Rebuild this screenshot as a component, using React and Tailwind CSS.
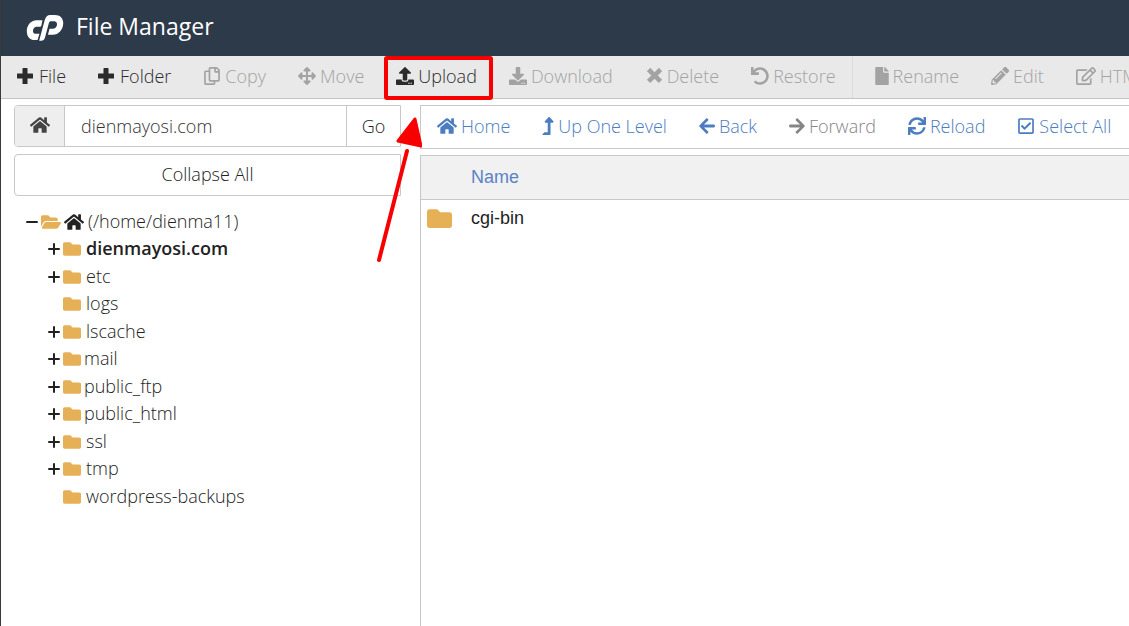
import {
  FaRegCopy, FaArrowsAlt, FaFile, FaPencilAlt, FaHome, FaLevelUpAlt, FaRegCheckSquare,
  FaFolder, FaFolderOpen, FaRegEdit, FaUpload, FaDownload, FaUndo, FaSync, FaArrowLeft, FaArrowRight,
} from "react-icons/fa";

function CpLogo() {
  return (
    <svg viewBox="79 43 114 80" className="h-[26px] w-[38px] shrink-0" fill="#fff" aria-hidden="true">
      <path d="M128 59H110C92 59 80 75 80 92c0 18 10 28 24 28h9l6-19h-11c-6 0-9-4-9-9 0-8 5-13 11-13h9c3 0 5-1 6-4z" />
      <path d="M118 122l17-63C138 48 144 43 152 43h14c18 0 27 12 26 27-1 18-14 34-32 34h-15l5-19h11c8 0 12-7 12-14 0-6-4-9-9-9h-9c-4 0-6 2-7 6l-12 44c-2 7-6 10-11 10z" />
    </svg>
  );
}

function ThickPlus({ className }) {
  return (
    <svg viewBox="0 0 16 16" className={className} fill="currentColor" aria-hidden="true">
      <path d="M6 0h4a.5.5 0 0 1 .5.5v5h5a.5.5 0 0 1 .5.5v4a.5.5 0 0 1-.5.5h-5v5a.5.5 0 0 1-.5.5H6a.5.5 0 0 1-.5-.5v-5h-5A.5.5 0 0 1 0 10V6a.5.5 0 0 1 .5-.5h5v-5A.5.5 0 0 1 6 0z" />
    </svg>
  );
}

function ThickCross({ className }) {
  return (
    <svg viewBox="-1 0 17 17" className={className} fill="currentColor" aria-hidden="true">
      <path d="M3.9.8L8 4.900 12.100.8l3.100 3.100L11.100 8l4.100 4.100-3.100 3.100L8 11.100l-4.100 4.100L.8 12.100 4.900 8 .8 3.900z" />
    </svg>
  );
}

function TreeSign({ open }) {
  return (
    <svg viewBox="0 0 12 12" className="size-3" fill="none" stroke="currentColor" strokeWidth="2" strokeLinecap="round" aria-hidden="true">
      <path d={open ? "M1 6H11" : "M1 6H11M6 1V11"} />
    </svg>
  );
}

const tools = [
  { label: "File", icon: ThickPlus, size: "mr-[2px] size-4", on: true },
  { label: "Folder", icon: ThickPlus, size: "mr-[2px] size-4", on: true },
  { label: "Copy", icon: FaRegCopy, size: "size-[18px]" },
  { label: "Move", icon: FaArrowsAlt, size: "size-[18px]" },
  { label: "Upload", icon: FaUpload, size: "size-[18px]", on: true, marked: true },
  { label: "Download", icon: FaDownload, size: "size-[18px]" },
  { label: "Delete", icon: ThickCross, size: "size-[18px]" },
  { label: "Restore", icon: FaUndo, size: "size-[18px]" },
  { label: "Rename", icon: FaFile, size: "h-[18px] w-[14px]", split: true },
  { label: "Edit", icon: FaPencilAlt, size: "size-[18px]" },
  { label: "HTML Editor", icon: FaRegEdit, size: "size-5" },
];

const actions = [
  { label: "Home", icon: FaHome, size: "size-5" },
  { label: "Up One Level", icon: FaLevelUpAlt, size: "h-[18px] w-3" },
  { label: "Back", icon: FaArrowLeft, size: "h-[18px] w-4" },
  { label: "Forward", icon: FaArrowRight, size: "h-[18px] w-4", off: true },
  { label: "Reload", icon: FaSync, size: "size-[18px]" },
  { label: "Select All", icon: FaRegCheckSquare, size: "size-[18px]" },
];

const folders = [
  { name: "dienmayosi.com", kids: true, current: true },
  { name: "etc", kids: true },
  { name: "logs" },
  { name: "lscache", kids: true },
  { name: "mail", kids: true, tight: true },
  { name: "public_ftp", kids: true, tight: true },
  { name: "public_html", kids: true, tight: true },
  { name: "ssl", kids: true },
  { name: "tmp", kids: true },
  { name: "wordpress-backups" },
];

function Callout() {
  return (
    <svg viewBox="0 0 46 148" className="pointer-events-none absolute top-full left-[-4px] z-10 mt-[17px] h-[148px] w-[46px]" aria-hidden="true">
      <path d="M3 145L31 36" stroke="#f80000" strokeWidth="4" strokeLinecap="round" />
      <path d="M39 4L22 26L45 31z" fill="#f80000" stroke="#f80000" strokeWidth="3" strokeLinejoin="round" />
    </svg>
  );
}

export default function App() {
  return (
    <div className="flex min-h-screen flex-col overflow-hidden border-l border-[#3a3a3a] bg-white font-['Open_Sans',sans-serif] text-lg font-light text-[#222]">
      <header className="flex h-14 items-center gap-3 bg-[#2d3a4a] pl-[25px] text-white">
        <CpLogo />
        <h1 className="pb-[2px] text-[23px] font-normal">File Manager</h1>
      </header>

      <nav aria-label="File tools" className="flex h-[43px] border-b border-[#c4c4c4] bg-[#e9e9e9]">
        {tools.map(({ label, icon: Icon, size, on, marked, split }) => (
          <div key={label} className={split ? "flex shrink-0 border-l border-[#dcdcdc] pl-[6px]" : "relative flex shrink-0"}>
            <button type="button" disabled={!on} className={`flex items-center gap-1 px-4 pb-[2px] whitespace-nowrap ${on ? "text-[#2b2b2b]" : "text-[#a3a3a3]"}`}>
              <Icon className={`shrink-0 ${size}`} />
              {label}
            </button>
            {marked && (
              <>
                <span className="pointer-events-none absolute top-0 right-0 bottom-[-2px] left-1 rounded-[3px] border-4 border-[#f80000]" />
                <Callout />
              </>
            )}
          </div>
        ))}
      </nav>

      <div className="flex flex-1 pt-[6px]">
        <aside className="w-[400px] shrink-0 pl-[13px]">
          <form className="flex h-[42px] overflow-hidden rounded-l border border-[#c8c8c8]" onSubmit={(e) => e.preventDefault()}>
            <button type="button" aria-label="Home directory" className="flex w-[50px] shrink-0 items-center justify-center border-r border-[#c8c8c8] bg-[#eee] pb-[2px] text-[#444]">
              <FaHome className="size-5" />
            </button>
            <input aria-label="Path" defaultValue="dienmayosi.com" className="min-w-0 flex-1 px-4 text-[#333] outline-none" />
            <button type="submit" className="w-[54px] shrink-0 border-l border-[#c8c8c8]">Go</button>
          </form>
          <button type="button" className="mt-[7px] block h-[42px] w-full rounded-l border border-[#c8c8c8] pb-[2px]">Collapse All</button>

          <ul className="mt-3 pl-3 leading-[27px]">
            <li>
              <div className="flex items-center">
                <button type="button" aria-label="Collapse home"><TreeSign open /></button>
                <FaFolderOpen className="ml-[3px] size-5 text-[#e6b056]" />
                <FaHome className="ml-[3px] size-5" />
                <span className="ml-1">(/home/dienma11)</span>
              </div>
              <ul className="pl-[22px]">
                {folders.map(({ name, kids, current, tight }) => (
                  <li key={name} className="flex items-center odd:pb-px">
                    <span className="flex w-3">
                      {kids && <button type="button" aria-label={`Expand ${name}`}><TreeSign /></button>}
                    </span>
                    <FaFolder className="ml-[3px] size-[18px] text-[#e6b056]" />
                    <a href="#" className={`${tight ? "ml-[3px]" : "ml-[5px]"} ${current ? "font-semibold" : ""}`}>{name}</a>
                  </li>
                ))}
              </ul>
            </li>
          </ul>
        </aside>

        <main className="ml-[19px] flex min-w-0 flex-1 flex-col">
          <div className="flex h-11 overflow-hidden border-y border-l border-[#c8c8c8]">
            {actions.map(({ label, icon: Icon, size, off }) => (
              <button key={label} type="button" disabled={off} className={`flex shrink-0 items-center gap-1 px-4 pb-[2px] whitespace-nowrap ${off ? "text-[#858585]" : "text-[#4c7dc0]"}`}>
                <Icon className={`shrink-0 ${size}`} />
                {label}
              </button>
            ))}
          </div>
          <div className="mt-[6px] flex-1 border-t border-l border-[#c8c8c8]">
            <table className="w-full border-collapse text-left font-['Liberation_Sans',sans-serif] font-normal">
              <thead>
                <tr className="h-[43px] border-b border-[#c8c8c8] bg-[#f1f1f1]">
                  <th className="w-[50px]" aria-label="Type" />
                  <th className="font-normal text-[#5b83c4]">Name</th>
                </tr>
              </thead>
              <tbody>
                <tr className="h-[38px]">
                  <td className="pl-[6px]"><FaFolder className="size-[25px] text-[#e6b056]" /></td>
                  <td>cgi-bin</td>
                </tr>
              </tbody>
            </table>
          </div>
        </main>
      </div>
    </div>
  );
}
